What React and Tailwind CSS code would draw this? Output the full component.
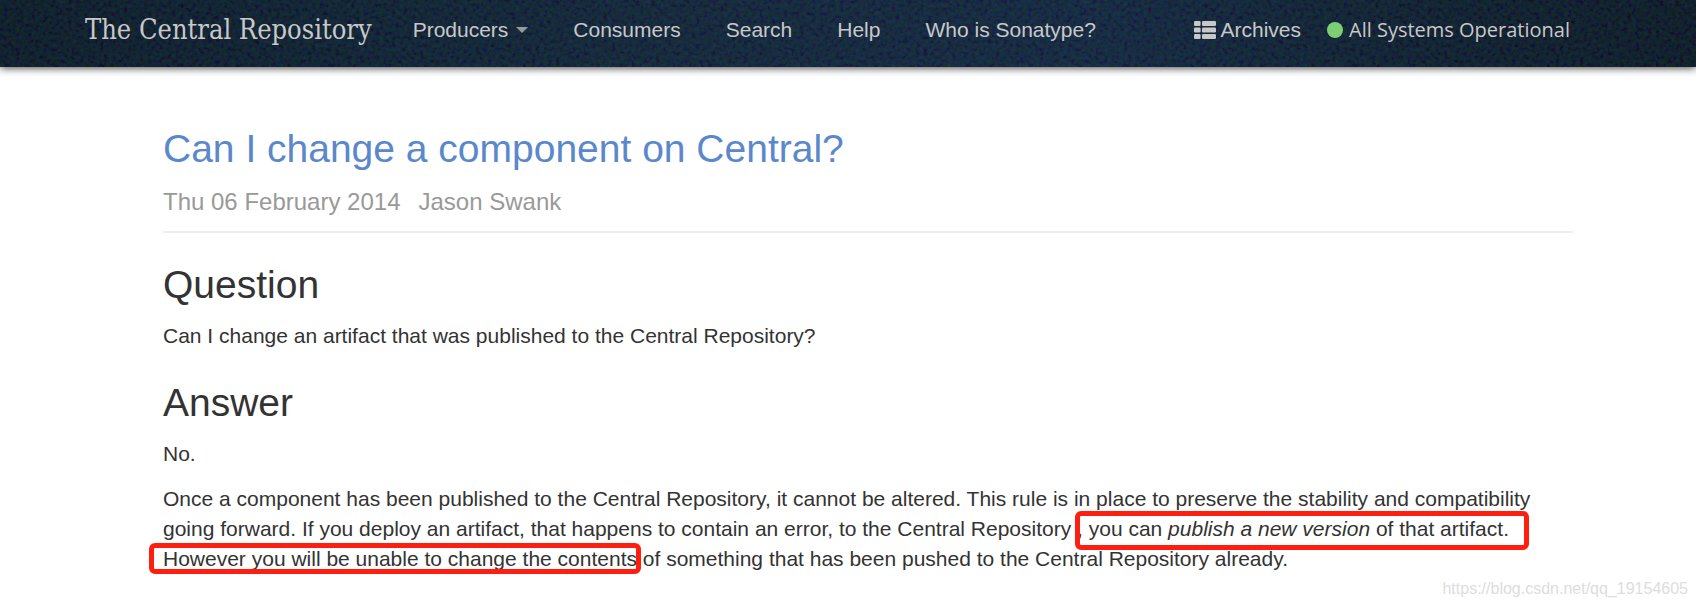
const links = ['Consumers', 'Search', 'Help', 'Who is Sonatype?'];

function Marked({ box, children }) {
  return (
    <span className="relative">
      {children}
      <span aria-hidden="true" className={'pointer-events-none absolute rounded-md border-5 border-[#ff1e10] ' + box} />
    </span>
  );
}

function ListIcon() {
  return (
    <svg aria-hidden="true" viewBox="0 0 22 18" className="h-[18px] w-[22px]" fill="currentColor">
      {[0, 6.5, 13].map((y) => (
        <g key={y}>
          <rect x="0" y={y} width="6.6" height="5" rx="1.2" />
          <rect x="8" y={y} width="14" height="5" rx="1.2" />
        </g>
      ))}
    </svg>
  );
}

function NavTexture() {
  return (
    <svg aria-hidden="true" className="pointer-events-none absolute inset-0 h-full w-full opacity-15">
      <filter id="grain">
        <feTurbulence type="fractalNoise" baseFrequency="0.25" numOctaves="3" seed="4" />
        <feColorMatrix values="0.3 0 0 0 -0.05  0 0.9 0 0 -0.25  0 0 0.9 0 -0.2  0 0 0 0 1" />
      </filter>
      <rect width="100%" height="100%" filter="url(#grain)" />
    </svg>
  );
}

export default function App() {
  return (
    <div className="relative min-h-screen bg-white font-['Liberation_Sans',Arial,sans-serif] text-[21px] leading-[30px] text-[#333333]">
      <header className="relative bg-[linear-gradient(90deg,#06121f_0%,#081829_18%,#0c1d31_38%,#0d1f38_65%,#081626_85%,#06111e_100%)] shadow-[0_1px_8px_rgba(0,0,0,0.75)]">
        <NavTexture />
        <nav className="relative flex h-[67px] items-center whitespace-nowrap pr-[126px] pb-[7px] pl-[85px] text-[#c8c8c8]">
          <a href="#home" className="font-['DejaVu_Serif_Condensed','DejaVu_Serif',serif] text-[27px] font-extralight">The Central Repository</a>
          <div className="ml-[41px] flex items-center gap-[45px]">
            <button type="button" className="flex items-center gap-2">
              Producers
              <span className="border-x-6 border-t-6 border-x-transparent border-t-[#999999]" />
            </button>
            {links.map((l) => (
              <a key={l} href={'#' + l.split(' ')[0].toLowerCase()}>{l}</a>
            ))}
          </div>
          <div className="ml-auto flex items-center">
            <a href="#archives" className="flex items-center gap-1">
              <ListIcon />
              Archives
            </a>
            <a href="#status" className="ml-[26px] flex items-center gap-[6px] font-['Open_Sans','Noto_Sans',sans-serif] text-xl">
              <span className="size-4 rounded-full bg-[#7dcf74]" />
              All Systems Operational
            </a>
          </div>
        </nav>
      </header>

      <main className="pt-[52px] pr-[123px] pl-[163px]">
        <div className="border-b-2 border-[#eeeeee] pb-[14px]">
          <h1 className="text-[39px] leading-[60px]">
            <a href="#article" className="text-[#5a88ca]">Can I change a component on Central?</a>
          </h1>
          <p className="mt-2 flex gap-[18px] text-2xl leading-[30px] text-[#999999]">
            <span>Thu 06 February 2014</span>
            <span>Jason Swank</span>
          </p>
        </div>
        <h2 className="mt-[22px] text-[39px] leading-[60px]">Question</h2>
        <p className="mt-[6px]">Can I change an artifact that was published to the Central Repository?</p>
        <h2 className="mt-[22px] text-[39px] leading-[60px]">Answer</h2>
        <p className="mt-[6px]">No.</p>
        <p className="mt-[15px]">
          Once a component has been published to the Central Repository, it cannot be altered. This rule is in place to preserve the stability and compatibility going forward. If you deploy an artifact, that happens to contain an error, to the Central Repository{' '}
          <Marked box="-top-1.5 -right-5 -bottom-2.5 -left-0.5">
            , you can <em>publish a new version</em> of that artifact.
          </Marked>{' '}
          <Marked box="-top-1 -right-1 -bottom-1 -left-3.5">However you will be unable to change the contents</Marked>{' '}
          of something that has been pushed to the Central Repository already.
        </p>
      </main>

      <div className="absolute right-2 bottom-1 text-base text-[#dddddd]">https://blog.csdn.net/qq_19154605</div>
    </div>
  );
}
